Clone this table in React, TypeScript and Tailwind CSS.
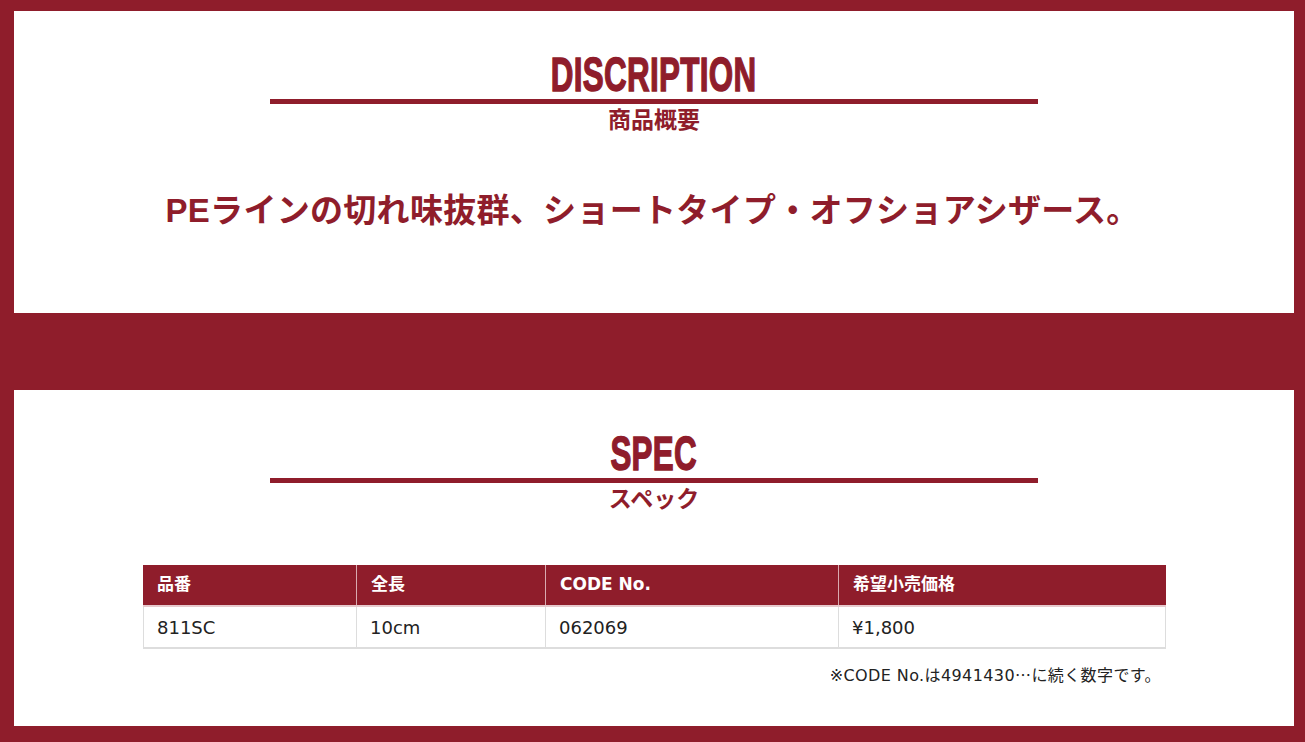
const font = "font-['Liberation_Sans','Noto_Sans_CJK_JP',sans-serif]";
const tableFont = "font-['DejaVu_Sans','Noto_Sans_CJK_JP',sans-serif]";

const cols = ["w-[213px]", "w-[189px]", "w-[293px]", "w-[327px]"];
const head = ["品番", "全長", "CODE No.", "希望小売価格"];
const row = ["811SC", "10cm", "062069", "¥1,800"];

function Heading({ en, ja }: { en: string; ja: string }) {
  return (
    <div className="flex flex-col items-center">
      <div className="flex h-[49px] items-center justify-center overflow-visible">
        <span className="inline-block scale-x-[0.64] font-['Liberation_Sans',sans-serif] text-[49px] font-bold leading-none tracking-[0.5px] text-[#8f1d2b] [-webkit-text-stroke:1.5px_#8f1d2b]">
          {en}
        </span>
      </div>
      <div className="h-[5px] w-[768px] bg-[#8f1d2b]" />
      <p className={`mt-[5px] text-[23px] font-bold leading-none text-[#8f1d2b] ${font}`}>{ja}</p>
    </div>
  );
}

export default function App() {
  return (
    <div className={`min-h-[742px] w-[1305px] bg-[#8f1d2b] pt-[11px] pb-[16px] ${font}`}>
      <section className="ml-[14px] h-[302px] w-[1280px] bg-white pt-[39px]">
        <Heading en="DISCRIPTION" ja="商品概要" />
        <p className="mt-[62px] pr-[3px] text-center text-[33px] font-bold leading-none tracking-[0.3px] text-[#8f1d2b]">
          PEラインの切れ味抜群、ショートタイプ・オフショアシザース。
        </p>
      </section>

      <section className="ml-[14px] mt-[77px] h-[336px] w-[1280px] bg-white pt-[39px]">
        <Heading en="SPEC" ja="スペック" />
        <div className={`ml-[129px] mt-[54px] w-[1023px] ${tableFont}`}>
          <div className="flex h-[42px] border-b-2 border-[#e6c9cd] bg-[#8f1d2b]">
            {head.map((h, i) => (
              <div
                key={h}
                className={`${cols[i]} flex items-center px-[14px] text-[17px] font-semibold text-white ${
                  i > 0 ? "border-l border-[#d9aab0]" : ""
                }`}
              >
                {h}
              </div>
            ))}
          </div>
          <div className="flex h-[42px] border-x border-b-2 border-[#dddddd]">
            {row.map((c, i) => (
              <div
                key={c}
                className={`${i === 0 ? "w-[212px]" : cols[i]} ${i === 3 ? "w-[326px]" : ""} flex items-center px-[13px] text-[18px] text-[#222]`}
              >
                <span className={i > 0 ? "-ml-[13px] flex h-full items-center border-l border-[#dddddd] pl-[13px]" : ""}>
                  {c}
                </span>
              </div>
            ))}
          </div>
          <p className="mt-[17px] pr-[5px] text-right text-[16px] leading-none tracking-[0.4px] text-[#222]">
            ※CODE No.は4941430<span className="font-['Noto_Sans_CJK_JP',sans-serif]">…</span>に続く数字です。
          </p>
        </div>
      </section>
    </div>
  );
}
